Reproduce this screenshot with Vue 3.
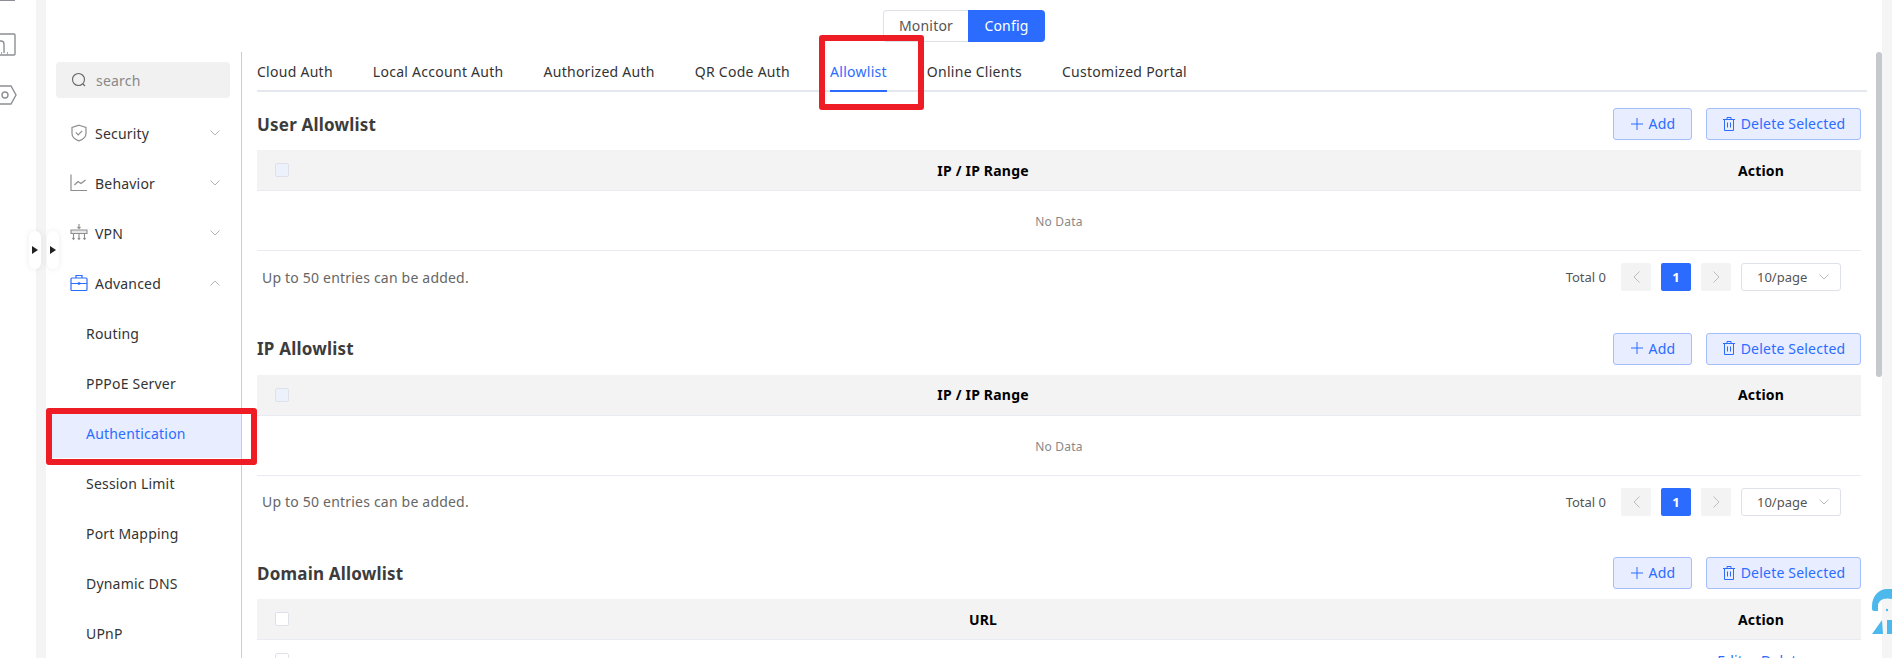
<script setup>
const menuTop = [
  { name: 'Security', icon: 'shield' },
  { name: 'Behavior', icon: 'chart' },
  { name: 'VPN', icon: 'vpn' },
]
const subMenu = ['Routing', 'PPPoE Server', 'Authentication', 'Session Limit', 'Port Mapping', 'Dynamic DNS', 'UPnP']
const tabs = ['Cloud Auth', 'Local Account Auth', 'Authorized Auth', 'QR Code Auth', 'Allowlist', 'Online Clients', 'Customized Portal']
const sections = [
  { title: 'User Allowlist', column: 'IP / IP Range' },
  { title: 'IP Allowlist', column: 'IP / IP Range' },
]
</script>

<template>
  <div class="page">
    <aside class="rail">
      <span class="rail-bar"></span>
      <svg class="rail-device" width="16" height="24" viewBox="0 0 16 24" fill="none" stroke="#8d8f94" stroke-width="1.4">
        <path d="M-2 1h16a1 1 0 0 1 1 1v19a1 1 0 0 1-1 1H-2" />
        <path d="M-2 8h3a3 3 0 0 1 3 3v9M1 20h1M7 20h1" />
      </svg>
      <svg class="rail-hex" width="17" height="20" viewBox="0 0 17 20" fill="none" stroke="#8d8f94" stroke-width="1.4">
        <path d="M-2 1h13l5 9-5 9H-2" />
        <circle cx="5" cy="10" r="3" />
      </svg>
    </aside>
    <div class="rail-gap"></div>

    <button class="handle handle--one"><i></i></button>
    <button class="handle handle--two"><i></i></button>

    <main class="main">
      <header class="top">
        <div class="switch">
          <span class="switch-item">Monitor</span>
          <span class="switch-item switch-item--on">Config</span>
        </div>
      </header>

      <div class="body">
        <nav class="side">
          <div class="search">
            <svg width="16" height="16" viewBox="0 0 16 16" fill="none" stroke="#666" stroke-width="1.1">
              <circle cx="7.5" cy="7.5" r="6" />
              <path d="M12 12l2 2" />
            </svg>
            <span>search</span>
          </div>

          <a v-for="item in menuTop" :key="item.name" class="menu-row">
            <svg v-if="item.icon === 'shield'" class="menu-icon" width="18" height="18" viewBox="0 0 18 18" fill="none" stroke="#8e8e8e" stroke-width="1.2">
              <path d="M9 1.2l7 2.3v6c0 3.6-3 6-7 7.4-4-1.4-7-3.8-7-7.4v-6z" />
              <path d="M5.8 8.4l2.4 2.4 4-4" />
            </svg>
            <svg v-else-if="item.icon === 'chart'" class="menu-icon" width="18" height="18" viewBox="0 0 18 18" fill="none" stroke="#8e8e8e" stroke-width="1.2">
              <path d="M1 0.5v16h16" />
              <path d="M4.5 11l3.5-3.5 3 2 4.5-3.5" />
            </svg>
            <svg v-else class="menu-icon" width="18" height="18" viewBox="0 0 18 18" fill="none" stroke="#8e8e8e" stroke-width="1.1">
              <path d="M9 0v4M7.5 3l1.5 1.5L10.500 3" />
              <path d="M1 6h16v3.500H1z" fill="#e8e8e8" />
              <path d="M3.500 10v5M9 10v5M14.500 10v5M2.300 14l1.200 1.400L4.700 14M7.800 14L9 15.400 10.200 14M13.300 14l1.200 1.400 1.200-1.400" />
            </svg>
            <span class="menu-name">{{ item.name }}</span>
            <svg class="chevron" width="10" height="6" viewBox="0 0 10 6" fill="none" stroke="#b5b5b5">
              <path d="M.5.5L5 5 9.500.5" />
            </svg>
          </a>

          <a class="menu-row menu-row--open">
            <svg class="menu-icon" width="18" height="18" viewBox="0 0 18 18" fill="none" stroke="#2b6cff" stroke-width="1.2">
              <rect x="1" y="4" width="16" height="12.500" rx="1" />
              <path d="M6 4V1.500h6V4M1 9.500h16" />
              <rect x="7.800" y="8.300" width="2.400" height="2.400" fill="#2b6cff" stroke="none" />
            </svg>
            <span class="menu-name">Advanced</span>
            <svg class="chevron" width="10" height="6" viewBox="0 0 10 6" fill="none" stroke="#b5b5b5">
              <path d="M.5 5.500L5 1l4.500 4.500" />
            </svg>
          </a>

          <a
            v-for="name in subMenu"
            :key="name"
            class="sub-row"
            :class="{ 'sub-row--on': name === 'Authentication' }"
          >
            {{ name }}
            <span v-if="name === 'Authentication'" class="mark mark--side"></span>
          </a>
        </nav>

        <div class="content">
          <div class="tabs">
            <span
              v-for="tab in tabs"
              :key="tab"
              class="tab"
              :class="{ 'tab--on': tab === 'Allowlist' }"
            >
              {{ tab }}
              <span v-if="tab === 'Allowlist'" class="mark mark--tab"></span>
            </span>
          </div>

          <section v-for="section in sections" :key="section.title" class="block">
            <div class="block-head">
              <h3>{{ section.title }}</h3>
              <div class="actions">
                <button class="btn btn--add">
                  <svg width="12" height="12" viewBox="0 0 12 12" stroke="#2b6cff" fill="none"><path d="M6 0v12M0 6h12" /></svg>
                  Add
                </button>
                <button class="btn btn--del">
                  <svg width="12" height="14" viewBox="0 0 12 14" stroke="#2b6cff" fill="none">
                    <path d="M0 2.500h12M4 2.500V.5h4v2M1.500 2.500v11h9v-11M4.500 5.500v5M7.500 5.500v5" />
                  </svg>
                  Delete Selected
                </button>
              </div>
            </div>

            <div class="thead">
              <span class="cell-check"><span class="check check--off"></span></span>
              <span class="cell-main">{{ section.column }}</span>
              <span class="cell-action">Action</span>
            </div>
            <div class="empty">No Data</div>

            <div class="foot">
              <span class="note">Up to 50 entries can be added.</span>
              <div class="pager">
                <span class="total">Total 0</span>
                <span class="pg-btn">
                  <svg width="7" height="12" viewBox="0 0 7 12" fill="none" stroke="#bdbdbd"><path d="M6.500.5L1 6l5.500 5.500" /></svg>
                </span>
                <span class="pg-btn pg-btn--on">1</span>
                <span class="pg-btn">
                  <svg width="7" height="12" viewBox="0 0 7 12" fill="none" stroke="#bdbdbd"><path d="M.5.5L6 6 .5 11.500" /></svg>
                </span>
                <span class="size">
                  10/page
                  <svg width="10" height="6" viewBox="0 0 10 6" fill="none" stroke="#bdbdbd"><path d="M.5.5L5 5 9.500.5" /></svg>
                </span>
              </div>
            </div>
          </section>

          <section class="block">
            <div class="block-head">
              <h3>Domain Allowlist</h3>
              <div class="actions">
                <button class="btn btn--add">
                  <svg width="12" height="12" viewBox="0 0 12 12" stroke="#2b6cff" fill="none"><path d="M6 0v12M0 6h12" /></svg>
                  Add
                </button>
                <button class="btn btn--del">
                  <svg width="12" height="14" viewBox="0 0 12 14" stroke="#2b6cff" fill="none">
                    <path d="M0 2.500h12M4 2.500V.5h4v2M1.500 2.500v11h9v-11M4.500 5.500v5M7.500 5.500v5" />
                  </svg>
                  Delete Selected
                </button>
              </div>
            </div>
            <div class="thead">
              <span class="cell-check"><span class="check"></span></span>
              <span class="cell-main">URL</span>
              <span class="cell-action">Action</span>
            </div>
            <div class="trow">
              <span class="cell-check"><span class="check"></span></span>
              <span class="cell-main"></span>
              <span class="cell-action cell-links"><a>Edit</a><a>Delete</a></span>
            </div>
          </section>
        </div>

        <div class="scroll-track"><span class="scroll-thumb"></span></div>
      </div>
    </main>

    <div class="page-gutter"></div>

    <svg class="helper" width="21" height="46" viewBox="0 0 21 46" fill="#4db8ec">
      <path d="M1 17C1 7 8 0 16 0h5v10c-4-1-9-1-12 2l-2 3v7H3a2 2 0 0 1-2-2z" />
      <circle cx="16" cy="21" r="1.200" />
      <path d="M1 45l10-14 1 14z" />
      <rect x="16" y="31" width="5" height="14" />
    </svg>
  </div>
</template>

<style>
html,
body {
  margin: 0;
  overflow: hidden;
}
</style>

<style scoped>
.page {
  position: relative;
  display: flex;
  width: 1892px;
  height: 658px;
  overflow: hidden;
  background: #fff;
  color: #333;
  font-family: "Noto Sans", "Liberation Sans", sans-serif;
  font-size: 14px;
  letter-spacing: 0.2px;
}

.rail {
  width: 36px;
  flex: none;
  overflow: hidden;
  display: flex;
  flex-direction: column;
  align-items: flex-start;
}

.rail-bar {
  width: 15px;
  height: 1px;
  background: #8d8f94;
}

.rail-device {
  margin-top: 32px;
}

.rail-hex {
  margin-top: 28px;
}

.rail-gap {
  width: 10px;
  flex: none;
  background: #f4f4f4;
}

.handle {
  position: absolute;
  top: 231px;
  z-index: 2;
  width: 12px;
  height: 38px;
  padding: 0;
  border: none;
  border-radius: 6px;
  background: #fff;
  box-shadow: 0 0 6px rgba(0, 0, 0, 0.08);
}

.handle i {
  display: block;
  width: 0;
  height: 0;
  margin-left: 3px;
  border-left: 6px solid #222;
  border-top: 4.500px solid transparent;
  border-bottom: 4.500px solid transparent;
}

.handle--one {
  left: 29px;
}

.handle--two {
  left: 47px;
}

.main {
  flex: 1;
  min-width: 0;
  display: flex;
  flex-direction: column;
}

.top {
  height: 52px;
  flex: none;
  padding-top: 10px;
  box-sizing: border-box;
  display: flex;
  justify-content: center;
  align-items: flex-start;
}

.switch {
  display: flex;
  height: 32px;
}

.switch-item {
  width: 85px;
  box-sizing: border-box;
  border: 1px solid #dfe1e8;
  border-right: none;
  border-radius: 4px 0 0 4px;
  text-align: center;
  line-height: 30px;
  color: #555;
}

.switch-item--on {
  width: 77px;
  border: none;
  border-radius: 0 4px 4px 0;
  background: #2b6cff;
  color: #fff;
  line-height: 32px;
}

.body {
  flex: 1;
  min-height: 0;
  display: flex;
}

.side {
  width: 196px;
  flex: none;
  box-sizing: border-box;
  border-right: 1px solid #ccc;
  padding-top: 10px;
}

.search {
  display: flex;
  align-items: center;
  gap: 9px;
  height: 36px;
  width: 174px;
  margin: 0 0 10px 10px;
  padding-left: 15px;
  box-sizing: border-box;
  border-radius: 4px;
  background: #f1f1f1;
  color: #888;
}

.menu-row {
  display: flex;
  align-items: center;
  height: 50px;
  padding-left: 24px;
}

.menu-icon {
  flex: none;
}

.menu-name {
  margin-left: 7px;
  flex: 1;
}

.chevron {
  flex: none;
  margin-right: 21px;
}

.sub-row {
  position: relative;
  display: block;
  height: 50px;
  padding-left: 40px;
  line-height: 52px;
}

.sub-row--on {
  background: #e8eeff;
  color: #2b6cff;
}

.mark {
  position: absolute;
  z-index: 3;
  box-sizing: border-box;
  border: 6px solid #ee1c25;
  border-radius: 3px;
  pointer-events: none;
}

.mark--side {
  left: 0;
  right: -16px;
  top: 0;
  bottom: -7px;
}

.mark--tab {
  left: -11px;
  top: -17px;
  width: 105px;
  height: 75px;
}

.content {
  flex: 1;
  min-width: 0;
  padding: 0 9px 0 15px;
}

.tabs {
  display: flex;
  gap: 40px;
  height: 38px;
  border-bottom: 2px solid #e5e7ef;
  letter-spacing: 0.27px;
}

.tab {
  position: relative;
  height: 40px;
  box-sizing: border-box;
  line-height: 40px;
}

.tab--on {
  color: #2b6cff;
  border-bottom: 2px solid #2b6cff;
}

.block {
  height: 224.500px;
  padding-right: 6px;
  box-sizing: border-box;
}

.tabs + .block {
  margin-top: 16px;
}

.block-head {
  display: flex;
  align-items: center;
  justify-content: space-between;
  height: 32px;
}

.block-head h3 {
  margin: 0;
  font-size: 17px;
  font-weight: 700;
  color: #3c3c3c;
}

.actions {
  display: flex;
  gap: 14px;
}

.btn {
  display: flex;
  align-items: center;
  justify-content: center;
  gap: 6px;
  height: 32px;
  padding: 0 0 1px 1px;
  box-sizing: border-box;
  border: 1px solid #a3bdff;
  border-radius: 3px;
  background: #e8eeff;
  color: #2b6cff;
  font: inherit;
  letter-spacing: inherit;
}

.btn--add {
  width: 79px;
}

.btn--del {
  width: 155px;
}

.thead {
  display: flex;
  align-items: center;
  height: 41px;
  margin-top: 10px;
  box-sizing: border-box;
  border-bottom: 1px solid #e9ebf3;
  background: #f3f3f3;
  color: #000;
  font-weight: 700;
}

.cell-check {
  width: 48px;
  flex: none;
  display: flex;
  padding-left: 18px;
  box-sizing: border-box;
}

.check {
  width: 14px;
  height: 14px;
  box-sizing: border-box;
  border: 1px solid #dfe1ea;
  border-radius: 2px;
  background: #fff;
}

.check--off {
  background: #edf1fb;
}

.cell-main {
  flex: 1;
  text-align: center;
}

.cell-action {
  width: 200px;
  flex: none;
  text-align: center;
}

.empty {
  height: 60px;
  box-sizing: border-box;
  border-bottom: 1px solid #e9ebf3;
  text-align: center;
  line-height: 61px;
  font-size: 12px;
  color: #888;
}

.foot {
  display: flex;
  align-items: center;
  justify-content: space-between;
  height: 52px;
  padding: 0 20px 0 5px;
}

.note {
  color: #666;
}

.pager {
  display: flex;
  align-items: center;
  gap: 10px;
  font-size: 13px;
  letter-spacing: 0;
}

.total {
  margin-right: 5px;
  color: #555;
}

.pg-btn {
  display: flex;
  align-items: center;
  justify-content: center;
  width: 30px;
  height: 28px;
  border-radius: 2px;
  background: #f3f3f3;
}

.pg-btn--on {
  background: #2b6cff;
  color: #fff;
  font-weight: 700;
}

.size {
  display: flex;
  align-items: center;
  justify-content: space-between;
  width: 100px;
  height: 28px;
  padding: 0 11px 0 15px;
  box-sizing: border-box;
  border: 1px solid #dfe1ea;
  border-radius: 3px;
  color: #555;
}

.trow {
  display: flex;
  align-items: center;
  height: 40px;
}

.cell-links {
  display: flex;
  justify-content: center;
  gap: 18px;
  color: #2b6cff;
}

.scroll-track {
  width: 6px;
  flex: none;
}

.scroll-thumb {
  display: block;
  height: 325px;
  border-radius: 3px;
  background: #c5c8cc;
}

.page-gutter {
  width: 10px;
  flex: none;
  background: #f5f5f5;
}

.helper {
  position: absolute;
  left: 1871px;
  top: 589px;
  z-index: 2;
}
</style>
